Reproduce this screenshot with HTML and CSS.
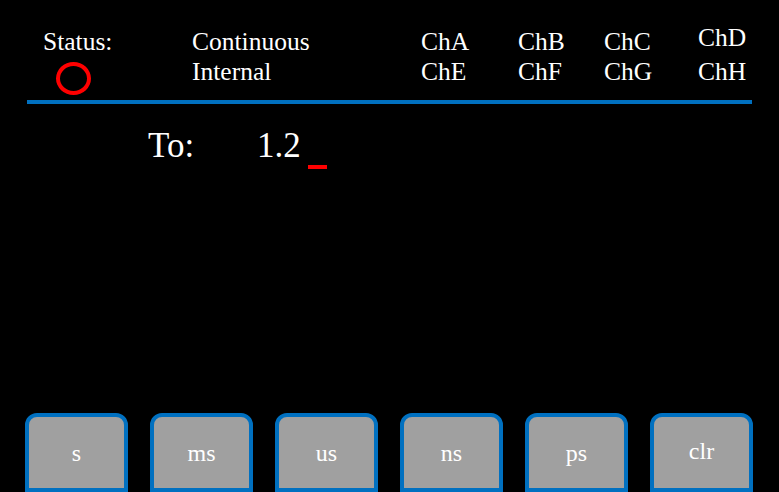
FILE: index.html
```html
<!DOCTYPE html>
<html>
<head>
<meta charset="utf-8">
<link rel="stylesheet" href="styles.css">
</head>
<body>
<div class="screen">
  <div class="header">
    <div class="col status">
      <div class="line">Status:</div>
      <div class="led"></div>
    </div>
    <div class="col mode">
      <div class="line">Continuous</div>
      <div class="line">Internal</div>
    </div>
    <div class="col ch ch1">
      <div class="line">ChA</div>
      <div class="line">ChE</div>
    </div>
    <div class="col ch ch2">
      <div class="line">ChB</div>
      <div class="line">ChF</div>
    </div>
    <div class="col ch ch3">
      <div class="line">ChC</div>
      <div class="line">ChG</div>
    </div>
    <div class="col ch ch4">
      <div class="line up">ChD</div>
      <div class="line down">ChH</div>
    </div>
  </div>
  <div class="rule"></div>
  <div class="entry">
    <span class="label">To:</span><span class="value">1.2</span><span class="cursor"></span>
  </div>
  <div class="keys">
    <div class="key">s</div>
    <div class="key">ms</div>
    <div class="key">us</div>
    <div class="key">ns</div>
    <div class="key">ps</div>
    <div class="key clr">clr</div>
  </div>
</div>
</body>
</html>
```

FILE: styles.css
```css
html, body {
  margin: 0;
  padding: 0;
  background: #000;
}
body {
  font-family: "Liberation Serif", "Times New Roman", serif;
  color: #fff;
}
.screen {
  width: 779px;
  height: 492px;
  display: flex;
  flex-direction: column;
  overflow: hidden;
}
.header {
  display: flex;
  height: 100px;
  box-sizing: border-box;
  padding: 27px 0 0 43px;
  font-size: 25.5px;
  line-height: 30px;
}
.col {
  display: flex;
  flex-direction: column;
}
.status { width: 149px; }
.mode { width: 229px; }
.ch1 { width: 97px; }
.ch2 { width: 86px; }
.ch3 { width: 94px; }
.ch4 { width: 60px; }
.up { margin-top: -4px; }
.down { margin-top: 4px; }
.led {
  width: 35px;
  height: 33px;
  box-sizing: border-box;
  border: 4px solid #ff0000;
  border-radius: 50%;
  margin: 5px 0 0 13px;
}
.rule {
  height: 4px;
  margin-left: 27px;
  width: 725px;
  background: #0070c0;
}
.entry {
  margin-top: 22px;
  padding-left: 148px;
  font-size: 35px;
  line-height: 40px;
  height: 40px;
  white-space: nowrap;
}
.label {
  display: inline-block;
  width: 109px;
}
.cursor {
  display: inline-block;
  width: 19px;
  height: 4px;
  background: #ff0000;
  margin-left: 7px;
  vertical-align: -12px;
}
.keys {
  margin-top: auto;
  display: flex;
  gap: 22px;
  padding-left: 25px;
}
.key {
  width: 103px;
  height: 79px;
  box-sizing: border-box;
  border: 4px solid #0070c0;
  border-radius: 12px 12px 0 0;
  background: #a0a0a0;
  text-align: center;
  font-size: 24px;
  line-height: 30px;
  padding-top: 21px;
}
.clr {
  padding-top: 19px;
}
```
